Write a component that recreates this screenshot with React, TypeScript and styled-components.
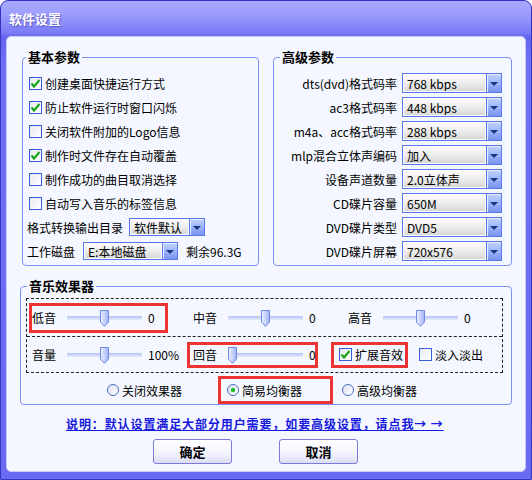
import {Fragment} from 'react'
import styled, {createGlobalStyle} from 'styled-components'

const GlobalStyle = createGlobalStyle`
	html, body {
		margin: 0;
		padding: 0;
		background: #ffffff;
	}
	body {
		font-family: "Noto Sans CJK SC", "DejaVu Sans", sans-serif;
		font-size: 12px;
		color: #000;
	}
`

const Window = styled.div`
	width: 532px;
	height: 480px;
	box-sizing: border-box;
	display: flex;
	flex-direction: column;
	border: 1px solid #3434c6;
	border-radius: 8px 8px 0 0;
	background: linear-gradient(#a9a9ff 0px, #9e9eff 12px, #7a7af6 32px, #6464ee 36px, #7070f4 60px, #6a6af0 100%);
	overflow: hidden;
`

const TitleBar = styled.div`
	height: 35px;
	flex: none;
	display: flex;
	align-items: center;
	padding-left: 8px;
	color: #ffffff;
	font-size: 13px;
	font-weight: bold;
	text-shadow: 1px 1px 1px rgba(50, 50, 150, 0.55);
`

const Panel = styled.div`
	flex: none;
	height: 436px;
	box-sizing: border-box;
	margin: 0 5px 7px 5px;
	padding: 12px 13px 0 13px;
	background: #f4f7ff;
	border: 1px solid #c6cbf6;
	border-radius: 5px;
	display: flex;
	flex-direction: column;
`

const TopRow = styled.div`
	display: grid;
	grid-template-columns: 237px 239px;
	column-gap: 14px;
	padding-left: 2px;
`

const Group = styled.fieldset<{$pad: string}>`
	margin: 0;
	min-width: 0;
	border: 1px solid #7f8ff0;
	border-radius: 4px;
	padding: ${p => p.$pad};
`

const Legend = styled.legend<{$shift: number}>`
	padding: 0 2px;
	margin-left: ${p => p.$shift}px;
	font-size: 13px;
	font-weight: bold;
	line-height: 16px;
`

const CheckRow = styled.label`
	height: 24px;
	display: flex;
	align-items: center;
	gap: 3px;
	padding-left: 2px;
	white-space: nowrap;
`

const Box = styled.span`
	width: 13px;
	height: 13px;
	flex: none;
	box-sizing: border-box;
	border: 1px solid #3d5cdc;
	background: linear-gradient(135deg, #e6e9f2, #ffffff);
	display: flex;
	align-items: center;
	justify-content: center;
`

const RadioDot = styled.span<{$on: boolean}>`
	width: 12px;
	height: 12px;
	flex: none;
	box-sizing: border-box;
	border: 1px solid #4a6cc8;
	border-radius: 50%;
	background: linear-gradient(135deg, #dfe3ee, #ffffff);
	display: flex;
	align-items: center;
	justify-content: center;
	&::after {
		content: '';
		width: 4px;
		height: 4px;
		border-radius: 50%;
		background: ${p => (p.$on ? '#19c419' : 'transparent')};
		box-shadow: ${p => (p.$on ? '0 0 1px #2a9a2a' : 'none')};
	}
`

const ComboRow = styled.div`
	height: 24px;
	display: flex;
	align-items: center;
	gap: 6px;
	white-space: nowrap;
`

const ComboLabel = styled.span<{$w?: number}>`
	width: ${p => (p.$w ? `${p.$w}px` : 'auto')};
	flex: none;
`

const Free = styled.span`
	margin-left: 2px;
`

const ComboBox = styled.div<{$w?: number; $h: number}>`
	width: ${p => (p.$w ? `${p.$w}px` : '100%')};
	height: ${p => p.$h}px;
	box-sizing: border-box;
	border: 1px solid #5a78ee;
	background: #ffffff;
	display: flex;
	flex: none;
`

const ComboText = styled.div`
	flex: 1;
	margin: 1px;
	padding-left: 3px;
	display: flex;
	align-items: center;
	white-space: nowrap;
	overflow: hidden;
	background: linear-gradient(#fbfbfb, #efefef 45%, #d8d8d8);
`

const ComboButton = styled.div`
	width: 14px;
	flex: none;
	border-left: 1px solid #5a78ee;
	box-shadow: inset 1px 1px 0 #e4ecff;
	background: linear-gradient(#c4d4ff, #9cb4fa 50%, #7894f0);
	display: flex;
	align-items: center;
	justify-content: center;
	&::after {
		content: '';
		border-left: 4px solid transparent;
		border-right: 4px solid transparent;
		border-top: 4px solid #1c3584;
		margin-top: 1px;
	}
`

const AdvGrid = styled.div`
	display: grid;
	grid-template-columns: 1fr 100px;
	grid-auto-rows: 24px;
	column-gap: 5px;
	align-items: center;
`

const AdvLabel = styled.span`
	text-align: right;
	white-space: nowrap;
`

const EffectsGroup = styled(Group)`
	margin-top: 12px;
`

const Dashed = styled.div`
	border: 1px dashed #202020;
`

const EffectRow = styled.div<{$cols: string; $h: number; $line?: boolean}>`
	height: ${p => p.$h}px;
	display: grid;
	grid-template-columns: ${p => p.$cols};
	align-items: center;
	justify-items: start;
	padding-left: 2px;
	border-top: ${p => (p.$line ? '1px dashed #202020' : 'none')};
`

const Unit = styled.div<{$marked?: boolean; $h: number; $padL?: number; $padR?: number}>`
	height: ${p => p.$h}px;
	box-sizing: border-box;
	display: flex;
	align-items: center;
	gap: 3px;
	white-space: nowrap;
	border: 3px solid ${p => (p.$marked ? '#ec3434' : 'transparent')};
	padding: 0 ${p => p.$padR ?? 0}px 0 ${p => p.$padL ?? 0}px;
`

const SliderLabel = styled.span`
	width: 32px;
	flex: none;
`

const Track = styled.div`
	position: relative;
	width: 75px;
	height: 18px;
	flex: none;
	&::before {
		content: '';
		position: absolute;
		left: 0;
		right: 0;
		top: 7px;
		height: 4px;
		border-radius: 1px;
		background: linear-gradient(#b3c2f4, #e6ebfd);
	}
`

const Thumb = styled.svg`
	position: absolute;
	top: 1px;
`

const SliderValue = styled.span<{$w: number}>`
	width: ${p => p.$w}px;
	margin-left: 3px;
	flex: none;
`

const RadioRow = styled.div`
	margin-top: 3px;
	height: 28px;
	display: grid;
	grid-template-columns: 120px 115px auto;
	padding-left: 72px;
	align-items: center;
`

const LinkRow = styled.div`
	margin-top: 10px;
	height: 16px;
	padding-left: 46px;
	display: flex;
	align-items: center;
`

const HelpLink = styled.a`
	color: #1717dd;
	font-weight: bold;
	letter-spacing: 0.9px;
	text-decoration: underline;
	white-space: nowrap;
	cursor: pointer;
`

const ButtonRow = styled.div`
	margin-top: 8px;
	padding-left: 133px;
	display: flex;
	gap: 47px;
`

const Button = styled.button`
	width: 79px;
	height: 25px;
	box-sizing: border-box;
	border: 1px solid #7a7ad8;
	border-radius: 3px;
	background: linear-gradient(#ffffff, #f4f4ff 55%, #dcdcf6);
	font-family: "Noto Sans CJK SC", sans-serif;
	font-size: 13px;
	font-weight: bold;
	color: #000;
	padding: 0;
`

const Check = ({checked, children}: {checked: boolean; children?: React.ReactNode}): JSX.Element => (
	<>
		<Box>
			{checked && (
				<svg width="11" height="11" viewBox="0 0 11 11">
					<path d="M1.5 5.5 L4 8.5 L9.5 2" fill="none" stroke="#1fa41f" strokeWidth="2.2" />
				</svg>
			)}
		</Box>
		{children}
	</>
)

const Combo = ({value, w, h}: {value: string; w?: number; h: number}): JSX.Element => (
	<ComboBox $w={w} $h={h}>
		<ComboText>{value}</ComboText>
		<ComboButton />
	</ComboBox>
)

interface ISlider {
	label: string
	value: number
	min: number
	max: number
	text: string
	textW: number
}

const Slider = ({label, value, min, max, text, textW}: ISlider): JSX.Element => {
	const left = Math.round(((value - min) / (max - min)) * (75 - 9))
	return (
		<>
			<SliderLabel>{label}</SliderLabel>
			<Track>
				<Thumb width="9" height="17" viewBox="0 0 9 17" style={{left}}>
					<defs>
						<linearGradient id="thumbFill" x1="0" y1="0" x2="1" y2="0">
							<stop offset="0" stopColor="#eef2ff" />
							<stop offset="1" stopColor="#9fb3f6" />
						</linearGradient>
					</defs>
					<path d="M0.5 0.5 H8.5 V12 L4.5 16.3 L0.5 12 Z" fill="url(#thumbFill)" stroke="#6e86e6" />
				</Thumb>
			</Track>
			<SliderValue $w={textW}>{text}</SliderValue>
		</>
	)
}

const advanced: [string, string][] = [
	['dts(dvd)格式码率', '768 kbps'],
	['ac3格式码率', '448 kbps'],
	['m4a、acc格式码率', '288 kbps'],
	['mlp混合立体声编码', '加入'],
	['设备声道数量', '2.0立体声'],
	['CD碟片容量', '650M'],
	['DVD碟片类型', 'DVD5'],
	['DVD碟片屏幕', '720x576'],
]

const basicChecks: [string, boolean][] = [
	['创建桌面快捷运行方式', true],
	['防止软件运行时窗口闪烁', true],
	['关闭软件附加的Logo信息', false],
	['制作时文件存在自动覆盖', true],
	['制作成功的曲目取消选择', false],
	['自动写入音乐的标签信息', false],
]

export default function App(): JSX.Element {
	return (
		<>
			<GlobalStyle />
			<Window>
				<TitleBar>软件设置</TitleBar>
				<Panel>
					<TopRow>
						<Group $pad="6px 6px 2px 4px">
							<Legend $shift={-1}>基本参数</Legend>
							{basicChecks.map(([text, on]) => (
								<CheckRow key={text}>
									<Check checked={on}>{text}</Check>
								</CheckRow>
							))}
							<ComboRow>
								<ComboLabel>格式转换输出目录</ComboLabel>
								<Combo value="软件默认" w={76} h={18} />
							</ComboRow>
							<ComboRow>
								<ComboLabel $w={50}>工作磁盘</ComboLabel>
								<Combo value="E:本地磁盘" w={95} h={18} />
								<Free>剩余96.3G</Free>
							</ComboRow>
						</Group>
						<Group $pad="6px 9px 2px 8px">
							<Legend $shift={-2}>高级参数</Legend>
							<AdvGrid>
								{advanced.map(([label, value]) => (
									<Fragment key={label}>
										<AdvLabel>{label}</AdvLabel>
										<Combo value={value} h={20} />
									</Fragment>
								))}
							</AdvGrid>
						</Group>
					</TopRow>

					<EffectsGroup $pad="4px 8px 0 5px">
						<Legend $shift={1}>音乐效果器</Legend>
						<Dashed>
							<EffectRow $cols="161px 155px auto" $h={37}>
								<Unit $marked $h={30} $padR={1}>
									<Slider label="低音" value={0} min={-12} max={12} text="0" textW={16} />
								</Unit>
								<Unit $h={30}>
									<Slider label="中音" value={0} min={-12} max={12} text="0" textW={8} />
								</Unit>
								<Unit $h={30}>
									<Slider label="高音" value={0} min={-12} max={12} text="0" textW={8} />
								</Unit>
							</EffectRow>
							<EffectRow $cols="158px 144px 80px auto" $h={35} $line>
								<Unit $h={26}>
									<Slider label="音量" value={100} min={0} max={200} text="100%" textW={26} />
								</Unit>
								<Unit $marked $h={26} $padL={3}>
									<Slider label="回音" value={0} min={0} max={100} text="0" textW={6} />
								</Unit>
								<Unit $marked $h={26} $padL={5} $padR={2}>
									<Check checked>扩展音效</Check>
								</Unit>
								<Unit $h={26} $padL={5}>
									<Check checked={false}>淡入淡出</Check>
								</Unit>
							</EffectRow>
						</Dashed>
						<RadioRow>
							<Unit $h={28} $padL={6} $padR={7}>
								<RadioDot $on={false} />
								关闭效果器
							</Unit>
							<Unit $marked $h={28} $padL={6} $padR={7}>
								<RadioDot $on />
								简易均衡器
							</Unit>
							<Unit $h={28} $padL={6} $padR={7}>
								<RadioDot $on={false} />
								高级均衡器
							</Unit>
						</RadioRow>
					</EffectsGroup>

					<LinkRow>
						<HelpLink>说明：默认设置满足大部分用户需要，如要高级设置，请点我→ →</HelpLink>
					</LinkRow>
					<ButtonRow>
						<Button>确定</Button>
						<Button>取消</Button>
					</ButtonRow>
				</Panel>
			</Window>
		</>
	)
}
